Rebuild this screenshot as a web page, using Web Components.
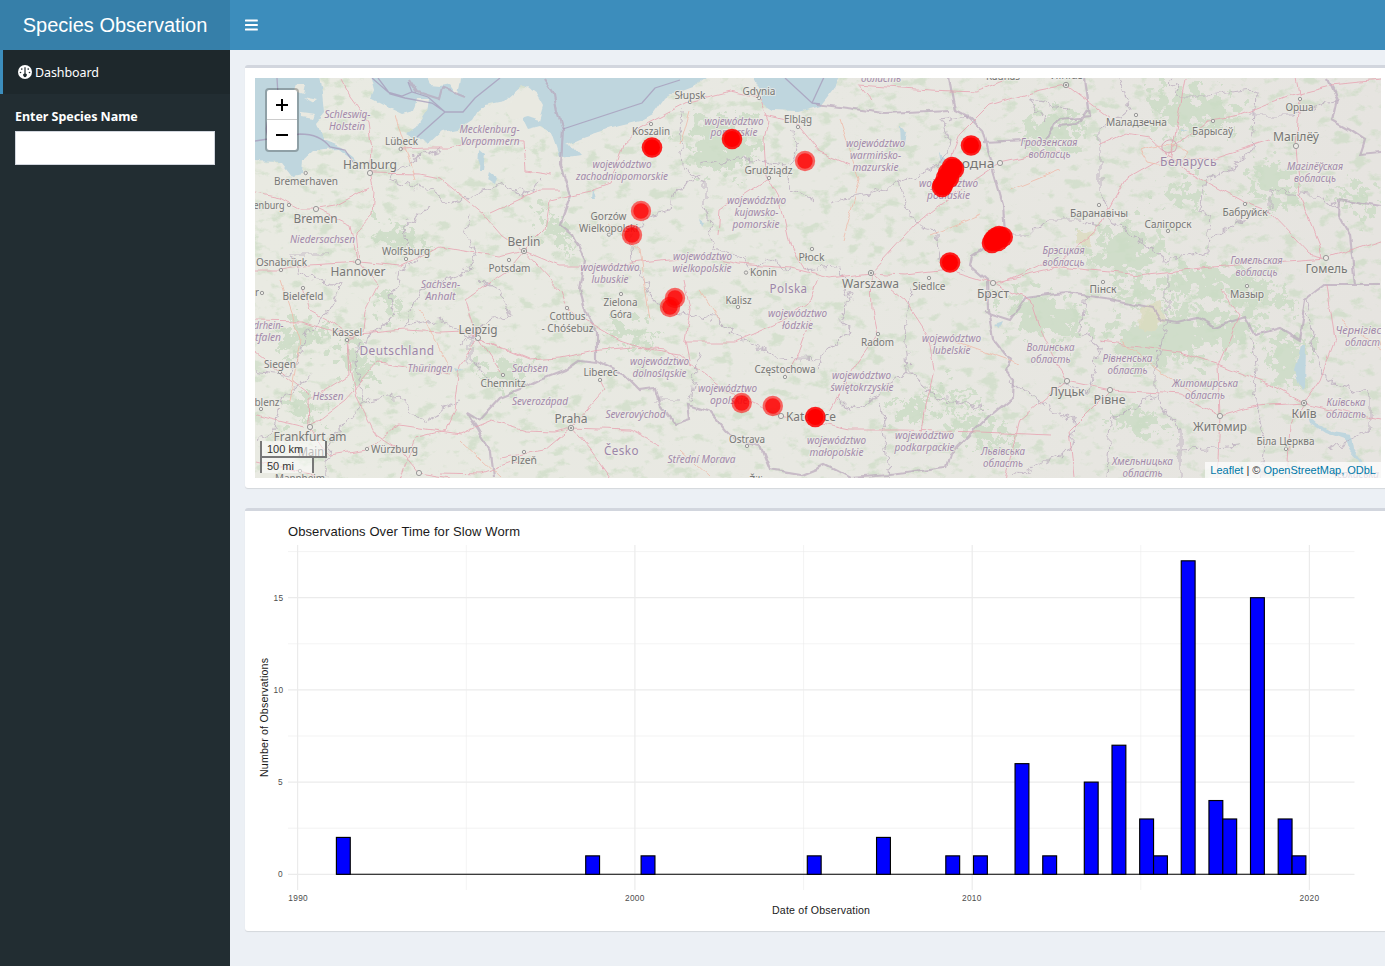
<!DOCTYPE html>
<html lang="en"><head><meta charset="utf-8"><title>Species Observation</title>
<style>html,body{margin:0;height:100%;overflow:hidden;background:#ecf0f5;font-family:"Noto Sans","Open Sans",sans-serif}</style></head>
<body><species-app></species-app>
<script>
const def=(name,html)=>customElements.define(name,class extends HTMLElement{
  constructor(){super();this.attachShadow({mode:'open'}).innerHTML=html;}
});

def('app-header',`<style>:host{display:flex;height:50px;background:#3c8dbc;color:#fff;flex:none}
.logo{width:230px;background:#367fa9;font:20px/50px "Liberation Sans",Arial,sans-serif;text-align:center;white-space:nowrap}
.toggle{display:flex;align-items:center;padding-left:15px}</style>
<div class="logo"><slot></slot></div><div class="toggle"><svg width="13" height="12" viewBox="0 0 13 12"><g fill="#fff"><rect y=".4" width="12.8" height="2" rx=".5"/><rect y="5" width="12.8" height="2" rx=".5"/><rect y="9.6" width="12.8" height="2" rx=".5"/></g></svg></div>`);

def('side-menu',`<style>:host{display:block;width:230px;background:#222d32;color:#fff;flex:none}
.item{height:44px;box-sizing:border-box;border-left:3px solid #3c8dbc;background:#1e282c;display:flex;align-items:center;padding-left:15px;gap:3px;font-size:12.5px}
.item svg{flex:none}.item span{letter-spacing:-.1px}
.group{padding:14px 15px}label{display:block;font-size:12.5px;font-weight:700;line-height:17px;margin-bottom:6px;letter-spacing:-.05px;white-space:nowrap}
input{display:block;box-sizing:border-box;width:200px;height:34px;border:1px solid #d2d6de;background:#fff;padding:6px 12px;border-radius:0;outline:0}</style>
<div class="item"><svg width="14" height="14" viewBox="0 0 14 14"><circle cx="7" cy="7" r="7" fill="#fff"/><g fill="#1e282c"><circle cx="2.5" cy="7.5" r=".8"/><circle cx="3.8" cy="4.1" r=".8"/><circle cx="10.2" cy="4.1" r=".8"/><circle cx="11.5" cy="7.5" r=".8"/><path d="M6.4 2.3h1.2v6.2a1.75 1.75 0 1 1-1.2 0z"/></g></svg><span>Dashboard</span></div>
<div class="group"><label>Enter Species Name</label><input aria-label="Species"></div>`);

def('content-box',`<style>:host{display:block;width:1146px;box-sizing:border-box;border-top:3px solid #d2d6de;border-radius:3px;background:#fff;box-shadow:0 1px 1px rgba(0,0,0,.1);padding:10px;margin-bottom:20px}</style><slot></slot>`);

// text, centre x, baseline, drawn width
const cities=[['Słupsk',690,98.5,31],['Gdynia',759,94.5,33],['Elbląg',798,122.5,28],['Koszalin',651,134.5,38],['Grudziądz',768.5,174,48],
['Lübeck',401.5,145,33],['Bremerhaven',306,184.5,64],['enburg',269,208.5,31],['Wolfsburg',406,255,48],['Osnabrück',281.5,266,51],['Potsdam',509.5,272,42],
['Bielefeld',303,300,41],['Kassel',347,336,30],['Siegen',280,368,32],['blenz',267,405.5,25],['Chemnitz',503,387,45],['Würzburg',394.5,453,47],['Plzeň',524,463.5,26],
['Gorzów',608.5,219.5,36],['Wielkopolski',608.5,231.5,59],['Płock',811.5,260.5,26],['Konin',763.5,276,27],['Kalisz',738.5,303.5,26],['Zielona',620.5,305.5,34],['Góra',621,317.5,22],
['Cottbus',567.5,319.5,36],['- Chóśebuz',567.5,331.5,52],['Liberec',600.5,375.5,34],['Częstochowa',785,373,61],['Ostrava',747,442.5,36],['Siedlce',929,289.5,33],['Radom',877.5,345.5,33],
['Маладзечна',1136.5,126,61],['Барысаў',1212.5,135,41],['Орша',1299.5,111,28],['Баранавічы',1099,217,58],['Салігорск',1168,227.5,47],['Бабруйск',1245,216,45],['Мазыр',1247,298,34],['Пінск',1103,293,27],['Біла Церква',1285.5,445,58],['Kaunas',1003,79.5,34],['Mannheim',300,482,50],['r',257,296,4],['Žilina',762,484,25]];
const big=[['Hamburg',370,168.5,54],['Bremen',315.5,223,44],['Berlin',524,245.5,33],['Hannover',358,276,55],['Leipzig',478,334,39],['Frankfurt am',310,440.5,73],['Main',311,456,26],['Praha',571,423,33],
['Warszawa',870.5,287.5,57],['Katowice',811,421,50],['Брэст',993,298,32],['Гродна',970.5,168,48],['Луцьк',1067,396,35],['Рівне',1109.5,403.5,32],['Магілёў',1296,141,46],['Гомель',1326.5,272.5,42],['Житомир',1220,431,54],['Київ',1304,417.5,25],['Vilnius',1066,79,34]];
const regions=[['Schleswig-',347.5,118,46],['Holstein',347,130,36],['Mecklenburg-',489.5,133,60],['Vorpommern',490,145,59],['Niedersachsen',322.5,243,65],['Sachsen-',440.5,288,39],['Anhalt',440.5,300,30],
['drhein-',268.5,329,30],['tfalen',268,341,26],['Thüringen',430,372,45],['Hessen',328,400,31],['Sachsen',530,372,36],['Severozápad',540,405,56],['Severovýchod',635.5,418,60],['Střední Morava',701.5,463,68],
['województwo',734,124.5,59],['pomorskie',734,136,47],['województwo',622,167.5,59],['zachodniopomorskie',622,180,92],['województwo',756.5,203.5,59],['kujawsko-',756.5,215.5,44],['pomorskie',756,227.5,47],
['województwo',702.5,259.5,59],['wielkopolskie',702,271.5,59],['województwo',610,270.5,59],['lubuskie',610,282.5,37],['województwo',797.5,317,59],['łódzkie',797.5,328.5,31],['województwo',659.5,365,59],['dolnośląskie',659.5,377,54],
['województwo',727.5,391.5,59],['opolskie',729,403.5,38],['województwo',836.5,444,59],['małopolskie',836.5,456,54],['województwo',924.5,439,59],['podkarpackie',924.5,451,60],['województwo',861.5,379,59],['świętokrzyskie',862,391,63],
['województwo',951.5,342,59],['lubelskie',951.5,354,38],['województwo',875.5,147,59],['warmińsko-',875.5,159,51],['mazurskie',875.5,171,46],['województwo',948.5,187,59],['podlaskie',948.5,199,43],['область',881,82,40],
['Гродзенская',1049,145.5,57],['вобласць',1049.5,157.5,42],['Брэсцкая',1063.5,253.5,42],['вобласць',1063.5,265.5,42],['Магілёўская',1315,170,56],['вобласць',1315,182,42],['Гомельская',1256.5,264,52],['вобласць',1256.5,276,42],
['Волинська',1050.5,351,48],['область',1050.5,363,40],['Рівненська',1127.5,362,50],['область',1127.5,374,40],['Житомирська',1205,387,66],['область',1205,399,40],['Київська',1346,406,39],['область',1346,418,40],
['Чернігівська',1367,334,63],['область',1365,346,40],['Львівська',1003,455,44],['область',1003,467,40],['Хмельницька',1142.5,465,61],['область',1142.5,477,40],['Черкаська',1355,478,48]];
const countries=[['Deutschland',397,354.5,75],['Polska',788.5,293,38],['Česko',621.5,455,35],['Беларусь',1188.5,165.5,57]];
const tx=(a,c)=>a.map(([t,x,y,w])=>`<text class="${c}" x="${x-w/2}" y="${y}" textLength="${w}" lengthAdjust="spacingAndGlyphs">${t}</text>`).join('');
const towns=[[400.7,149],[305.7,173],[289,205],[406,259],[281,270],[509,260],[303,288],[347,340],[280,372],[261,409],[503,375],[367,449],[524,452],[651,124],[690,102],[759,98],[798,127],[769,178],[609,234.6],[812,249],[746,272.6],[738,307],[621,294],[567,308],[600,380],[785,377],[747,446],[929,278],[878,334],[1136,115],[1213,121],[1300,99],[1099,205],[1168,231],[1245,204],[1247,286],[1103,282],[1286,449],[300,471],[262,293]];
const bigtowns=[[370,173],[316,209],[358,262],[478,338],[310,427],[781,416],[1000,163],[993,283],[1067,381],[1110,390],[1296,146],[1326,258],[1220,416],[419,473]];
const capitals=[[524,251],[571,428],[871,273],[1066,85],[1304,403]];
const roads=`M340 78L350 97 368 122 372 150 370 173 374 190 372 215 356 232 359 262 378 284 365 310 363 332 347 340 352 375 357 398 375 434 400 450 419 473
M316 209L335 206 370 187M370 173L420 174 440 178 482 213 502 236 524 251M400 149L428 148 450 148 484 139 523 142 525 170 552 174M255 193L280 198 300 209 316 209 350 225 357 260M359 262L400 266 440 247 500 257 524 251
M255 270L281 270 310 265 358 262M303 288L310 311 330 322 347 335 405 330 440 332 465 331 478 338 505 350 530 360 560 358 600 350 633 347 665 350 690 365
M255 320L303 321 355 338M347 340L349 375 309 400 310 427 345 400 378 363 420 369 450 375 M255 353L270 364 310 395M310 427L330 455 367 449 400 425 460 434 492 421 525 431 555 432 571 428
M478 338L460 365 455 410 446 430 415 438 400 480M478 338L503 375M524 251L508 270 490 282 465 300 478 338M524 251L545 230 550 200 590 191 610 184 622 145 640 128 690 102 730 92 759 98
M524 251L560 266 610 266 640 262 700 256 738 264 790 268 830 278 871 273 905 275 950 270 993 283M524 251L560 290 567 310 620 340 650 350 680 355 720 387 770 412 781 416 850 430 900 430 980 432 1050 435
M759 98L768 120 764 140 766 175 780 200 790 245 805 270M764 115L795 122 820 152 850 165 M769 178L720 210 718 235M871 273L872 310 877 334 852 370 830 410M871 273L915 225 960 190 1000 163 1060 150
M871 273L905 300 928 335 934 370 925 410 921 440M690 365L685 340 690 310 684 280M684 342L735 342 780 322 810 300 818 278M785 377L800 350 811 320M571 428L605 390 600 380M571 428L630 430 660 445M571 428L545 450 500 458
M571 428L590 450 610 478M870 100L858 85 930 90 975 92 1010 78M1066 85L1040 90 990 105 960 135 950 160 M1066 85L1110 118 M993 283L1050 270 1100 225 1125 180 1160 160 1190 135 1210 120 1240 115 1290 95 1330 85 1380 80
M1100 145L1125 133 1150 137 1185 170 1240 200 1270 212 1295 238 1310 254 1326 258 1381 240M1296 78L1300 99 1296 146 1300 195 1320 245 1322 258M1160 160L1215 158 1270 140M1170 160L1180 110 1185 78M1000 283L1040 265 1140 275 1200 268 1326 258
M993 283L1030 300 1040 330 1060 370 1067 381 1110 390 1180 394 1220 416 1255 406 1304 403 1320 380 1335 340 1327 285M1100 342L1180 352 1220 365 1270 385 1304 403M1220 416L1217 480M1304 403L1290 425 1287 480M1304 403L1381 420
M1220 290L1240 315 1218 365 1220 416M1067 381L1020 420 1005 478M1110 390L1070 430 1075 478M255 460L300 471 330 480M441 473L480 474 520 460M419 473L450 478M478 338L530 359M255 415L305 427M490 213L540 190 560 190`;
const borders=`M409 78L418 92 440 99 443 88 466 97 M543 78L554 95 557 112 563 130 561 165 571 195 560 225 572 235 585 260 580 290 587 315 597 332 597 362M597 362L580 360 566 370 540 380 520 390 500 398 480 420 467 412 478 430 490 450 493 478
M598 362L625 375 640 390 655 388 660 405 675 425 690 420 688 405 710 412 725 430 735 440 760 445 770 470 800 475 825 465 850 478 890 475 945 468M946 468L950 455 990 415 1012 397 1013 380 1005 370 1010 360 993 338 988 310 987 280 970 265 972 256 1005 235 1003 205 990 160 982 130 970 118 955 110 949 78
M815 104L885 113 950 110M983 143L1045 140 1060 120 1090 117 1085 78M1088 110L1078 125 1060 127M985 312L1010 320 1025 298 1065 293 1105 298 1152 308 1160 320 1176 323 1198 318 1215 327 1245 317 1255 335 1280 328 1300 340 1306 300 1325 285 1381 285M1328 78L1337 98 1332 120 1350 130 1365 140 1360 155 1381 153M1381 207L1340 200 1339 215 1350 235 1355 285`;
const adm=`M440 148L395 170 390 180 430 190 450 205 500 185 530 195 540 180M440 150L412 160M430 205L405 225 407 245 420 257 400 270 398 285 390 295 395 315 362 342 355 360 365 400 400 395 410 415 430 420 460 400M470 215L465 230 475 255 470 270 420 290 405 325 440 320 470 338 470 360 490 380
M480 280L500 290 510 315 490 320 460 345M255 370L290 375 310 330 330 310 340 285 300 275 290 255 330 255M310 375L280 400 275 430 255 440M365 400L330 440 325 478M682 110L680 130 685 170 700 175 672 195 670 210 650 215 630 235 632 260 645 280 650 295 665 310
M690 175L705 180 705 205 715 250 740 255 750 270 770 260 790 270M700 165L740 158 785 165 790 190 815 200M790 130L798 145 790 165M835 202L870 195 905 180 940 165 950 140 940 120 970 115M900 180L905 205 915 225 935 230 940 260 965 270M805 270L840 265 850 300 840 320 850 330 830 345 815 370
M910 290L905 330 908 370 880 395 850 410 835 395M880 400L885 440 890 478M908 370L940 400 970 405 985 410M665 310L720 320 750 345 780 358 820 360M700 350L690 400M655 400L680 400M1010 380L1050 410 1075 420 1070 450 1010 478M1085 295L1080 330 1100 345 1090 390 1060 385
M1168 275L1168 320 1155 370 1155 395 1110 420 1107 478M1155 395L1180 430 1180 478M1180 450L1240 445M1252 335L1258 370 1255 400 1265 440 1260 478M1306 300L1315 350 1325 380 1370 395 1370 430 1330 450M1170 78L1180 95 1210 95 1255 90 1252 150 1230 170 1205 180 1200 210 1210 215 1208 250 1165 260 1140 240 1110 220 1100 190 1100 130 1130 110 1120 78
M1210 240L1240 220 1270 210 1270 190 1320 195 1340 210M1250 115L1290 115 1340 100M1100 225L1080 220 1045 220 1030 235 1005 235M1045 120L1030 100 1070 110`;
const pt=(x,y,solid)=>solid?`<circle cx="${x}" cy="${y}" r="10.3" fill="red" fill-opacity=".87"/><circle cx="${x}" cy="${y}" r="8" fill="red"/>`
 :`<circle cx="${x}" cy="${y}" r="10.2" fill="red" fill-opacity=".57"/><circle cx="${x}" cy="${y}" r="7.7" fill="red" fill-opacity=".72"/>`;
let pins=[[641,211],[632,235],[805,161],[675,298],[670,307],[741.7,403],[772.8,406]].map(p=>pt(...p)).join('');
pins+=[[652,147.5],[732,139],[971,145.5],[950,262.5],[815.3,417],[942,187],[943,185],[946,178],[948,173],[952,167],[954,169],[949,178],[992,243],[993.5,240],[996,237.5],[999,236],[1002.7,237],[998,241]].map(p=>pt(...p,1)).join('');

def('species-map',`<style>:host{display:block;position:relative;width:1126px;height:400px;overflow:hidden;font-family:"Noto Sans",sans-serif}
svg.m{display:block}.c{font-size:10.8px;fill:#777775}.b{font-size:13px;fill:#777775}.r{font-size:10.4px;font-style:italic;fill:#a289aa}.n{font-size:13px;letter-spacing:.5px;fill:#9c86a8}
text{paint-order:stroke;stroke:#edece7;stroke-opacity:.8;stroke-width:2px;stroke-linejoin:round}
.zoom{position:absolute;left:10px;top:10px;border:2px solid rgba(0,0,0,.25);border-radius:4px;background:#fff;background-clip:padding-box;width:30px;display:grid}
.zoom div{height:30px;display:grid;place-items:center;box-sizing:border-box}.zoom div:first-child{border-bottom:1px solid #ccc;padding-top:1px}
.scale{position:absolute;left:5px;bottom:5px;font:11px/1.1 "Liberation Sans",Arial,sans-serif;color:#333}
.scale div{box-sizing:border-box;border:2px solid #777;border-top:0;background:rgba(255,255,255,.5);padding:1px 5px 2px;height:17px;width:67px;line-height:14px}
.scale div+div{border-top:2px solid #777;border-bottom:0;margin-top:-2px;padding-top:1px;width:54px}
.att{position:absolute;right:0;bottom:0;height:16px;padding:0 5px;background:rgba(255,255,255,.7);font:11px/16px "Liberation Sans",Arial,sans-serif;color:#333;white-space:nowrap}.att span{color:#0078a8}</style>
<svg class="m" width="1126" height="400" viewBox="255 78 1126 400">
<defs>
<filter id="wood" filterUnits="userSpaceOnUse" x="255" y="78" width="1126" height="400" color-interpolation-filters="sRGB"><feTurbulence type="fractalNoise" baseFrequency=".06 .09" numOctaves="6" seed="8"/><feColorMatrix values="0 0 0 0 .79 0 0 0 0 .86 0 0 0 0 .76 6 0 0 0 -3.35"/><feComposite in2="SourceGraphic" operator="in"/></filter>
<filter id="edge" filterUnits="userSpaceOnUse" x="255" y="78" width="1126" height="400"><feTurbulence type="fractalNoise" baseFrequency=".1" numOctaves="3" seed="4"/><feDisplacementMap in="SourceGraphic" scale="13" xChannelSelector="R" yChannelSelector="G"/></filter>
<filter id="grove" filterUnits="userSpaceOnUse" x="255" y="78" width="1126" height="400"><feTurbulence type="fractalNoise" baseFrequency=".09" numOctaves="5" seed="14"/><feDisplacementMap in="SourceGraphic" scale="65" xChannelSelector="R" yChannelSelector="G"/></filter>
<filter id="rough" filterUnits="userSpaceOnUse" x="255" y="78" width="1126" height="400"><feTurbulence type="fractalNoise" baseFrequency=".06" numOctaves="2" seed="2"/><feDisplacementMap in="SourceGraphic" scale="7" xChannelSelector="R" yChannelSelector="G"/></filter>
<linearGradient id="land"><stop offset="0" stop-color="#e9eae2"/><stop offset=".5" stop-color="#e8e8e2"/><stop offset="1" stop-color="#e6e4e0"/></linearGradient></defs>
<rect x="255" y="78" width="1126" height="400" fill="url(#land)"/>
<rect x="255" y="78" width="1126" height="400" filter="url(#wood)" opacity=".6"/>
<g fill="#cbdcc5" opacity=".8" filter="url(#grove)"><path d="M690 125l35-10 25 15 3 25-25 20-35-8zM1110 330l70-22 60 12 20 25-40 0-30 15-60 10zM1168 270l60-5 40 20 25 20-50 5-30-18-45 10zM1000 300l30-5 30 5 25 15-5 20-35 0-25-8zM1095 230l45-5 20 30-25 22-45-12zM1150 95l35-5 45 15 10 25-30-5-45 5zM1255 165l25-5 20 30-15 20-28-15zM1330 190l30-5 20 10-20 20zM600 325l35-2 25 10-30 16zM380 295l18-2 5 25-18 0zM375 225l38 5 10 20-20 5-25-15zM470 365l45-5 15 15-30 15zM280 330l45-8 0 18-40 15zM290 400l20 0 10 25-25-5zM900 395l28 0-5 25-20 5zM925 385l30 5 35 20-40-8zM940 410l50 10 30 25-45 0zM1020 125l40-15 25 10-10 25-35 5zM540 210l25 10 5 35-18-10zM345 340l30 15-10 35-15-15zM1270 340l40 0-15 50-25-15zM1165 180l25 0 10 18-25 10zM1110 290l40-8 15 16-40 4zM1110 410l45 5 15 14-45 2z"/></g>
<path d="M1140 306l20-6 5 18-14 14-12-4zM1075 230l18 3-4 12-14-4z" fill="#dcdcc0" opacity=".8" filter="url(#edge)"/>
<g fill="#bfd6de" filter="url(#rough)"><path d="M250 70L319 70 323 93 325 113 317 123 323 140 340 147 353 157 365 170 350 158 338 149 325 150 312 152 303 160 302 175 293 177 282 163 250 162z"/>
<path d="M369 70L374 90 371 98 385 105 402 113 413 110 417 98 428 98 426 112 416 127 405 135 412 139 425 138 430 143 442 132 458 129 472 120 478 110 485 105 505 101 522 86 535 93 535 110 523 118 528 128 540 125 552 134 557 148 560 158 580 155 572 146 565 145 580 138 610 128 640 121 653 114 663 100 677 92 693 86 710 75z"/>
<path d="M750 70L760 91 761 103 774 111 797 112 820 106 835 87 843 70z"/>
<path d="M480 150l6 5-2 15-5 0zM488 172l8 6-2 7-8-5zM592 188l3 12-4 0zM1301 345l5 0-1 47-6-8-4-13zM1308 416l10 9 15 7 18 3 2 12 12 17 15 14-12-8-18-20-5-10-20-7-15-10zM900 125l8 8-3 15-4-4zM938 150l8 9-6 5zM995 324l8-3-3 7zM700 220l4 3-2 4zM455 368l10 3-8 1zM1180 128l7 3-7 0z"/></g>
<g fill="#e9e9e1" filter="url(#rough)"><path d="M422 70L430 85 440 86 450 84 458 95 461 78 465 70zM297 84l9 0-2 9-9-3zM302 96l15 3-4 3zM301 112l14 2-2 4-12-2zM514 98l14-12 8 6 8 14-4 14-12-4-16 4-6-8z"/></g>
<path d="${borders}" fill="none" stroke="#b7a4ba" stroke-width="2.2" opacity=".65" filter="url(#rough)"/>
<path d="${adm}" fill="none" stroke="#b7a7bb" stroke-width="1.1" opacity=".7" filter="url(#edge)"/>
<path d="M277 78L278 95M278 107Q260 122 270 142M255 141L300 134Q320 134 330 147L345 150 355 165M372 78L388 92 402 96 412 92 428 97 445 112 463 112 475 98 500 78M378 78L390 94 405 98 432 103 445 112M412 92L408 82M417 137L445 112M563 129L642 103 655 88 680 80M785 78L812 103 825 75M812 103L820 104" fill="none" stroke="#a69ab9" stroke-width="1.3" opacity=".75"/>
<path d="${roads}" fill="none" stroke="#e89eae" stroke-width="1" opacity=".75" filter="url(#rough)"/>
<path d="M610 225L640 250 650 320M840 120L860 180 842 240M1060 170L1010 190M1140 150a30 15 0 0 1 47 2q-10 18-40 10zM690 110L680 145M930 235L980 215M460 440L500 478M700 290L720 320M280 280L300 340 290 400M395 115L415 180M680 450L710 478M1200 400L1120 340M1340 320L1381 350M950 340L1020 365M420 310L450 370" fill="none" stroke="#efbaaa" stroke-width="1" opacity=".8" filter="url(#rough)"/>
<path d="M1162 145q4-6 10-5 8 3 3 11-9 4-13-2z" fill="none" stroke="#d9a9b8"/>
<g fill="#eceae5" stroke="#999" stroke-width="1">${towns.map(([x,y])=>`<circle cx="${x}" cy="${y}" r="1.7"/>`).join('')}${bigtowns.map(([x,y])=>`<circle cx="${x}" cy="${y}" r="2.6"/>`).join('')}${capitals.map(([x,y])=>`<circle cx="${x}" cy="${y}" r="2.7"/><circle cx="${x}" cy="${y}" r=".8" fill="#777"/>`).join('')}</g>
${tx(regions,'r')}${tx(countries,'n')}${tx(cities,'c')}${tx(big,'b')}${pins}</svg>
<div class="zoom"><div><svg width="12" height="12"><path d="M0 6h12M6 0v12" stroke="#000" stroke-width="2"/></svg></div><div><svg width="12" height="12"><path d="M0 6h12" stroke="#000" stroke-width="2"/></svg></div></div>
<div class="scale"><div>100 km</div><div>50 mi</div></div>
<div class="att"><span>Leaflet</span> | © <span>OpenStreetMap, ODbL</span></div>`);

// bin index and count of the histogram
const bars=[[0,2],[18,1],[22,1],[34,1],[39,2],[44,1],[46,1],[49,6],[51,1],[54,5],[56,7],[58,3],[59,1],[61,17],[63,4],[64,3],[66,15],[68,3],[69,1]];
const y0=874.3,u=18.44,bw=13.85,x0=336.4;
def('time-chart',`<style>:host{display:block;width:1126px;height:400px}svg{display:block}text{font-family:"Liberation Sans",Arial,sans-serif}</style>
<svg width="1126" height="400" viewBox="255 521 1126 400">
<g stroke="#ebebeb" stroke-width=".6">${[0,1,2,3].map(i=>`<path d="M288 ${y0-u*(2.5+5*i)}H1354.5"/>`).join('')}${[466.3,803.6,1140.8].map(x=>`<path d="M${x} 545V890"/>`).join('')}</g>
<g stroke="#ebebeb" stroke-width="1.2">${[0,1,2,3].map(i=>`<path d="M288 ${y0-u*5*i}H1354.5"/>`).join('')}${[297.6,634.9,972.2,1309.4].map(x=>`<path d="M${x} 545V890"/>`).join('')}</g>
<path d="M${x0} ${y0}H${x0+70*bw}" stroke="#000" stroke-width="1.1"/>
${bars.map(([i,n])=>`<rect x="${x0+i*bw}" y="${y0-n*u}" width="${bw}" height="${n*u}" fill="#00f" stroke="#000" stroke-width="1.15"/>`).join('')}
<g fill="#1a1a1a"><text x="288" y="536" font-size="13" textLength="232">Observations Over Time for Slow Worm</text>
<text x="772" y="914" font-size="10.6" textLength="98">Date of Observation</text>
<text transform="translate(268 777) rotate(-90)" font-size="10.6" textLength="119">Number of Observations</text></g>
<g fill="#4d4d4d" font-size="8.3">${[0,5,10,15].map(n=>`<text x="${n>9?273.5:278}" y="${y0-n*u+2.8}" textLength="${n>9?9.5:4.7}">${n}</text>`).join('')}${[[288.3,1990],[625,2000],[962,2010],[1299.6,2020]].map(([x,t])=>`<text x="${x}" y="901" textLength="19.4">${t}</text>`).join('')}</g></svg>`);

def('species-app',`<style>:host{display:flex;flex-direction:column;width:1385px;height:966px;overflow:hidden}.body{display:flex;flex:1;min-height:0}main{flex:1;min-width:0;padding:15px 0 0 15px;overflow:hidden}</style>
<app-header>Species Observation</app-header><div class="body"><side-menu></side-menu><main><content-box><species-map></species-map></content-box><content-box><time-chart></time-chart></content-box></main></div>`);
</script></body></html>
